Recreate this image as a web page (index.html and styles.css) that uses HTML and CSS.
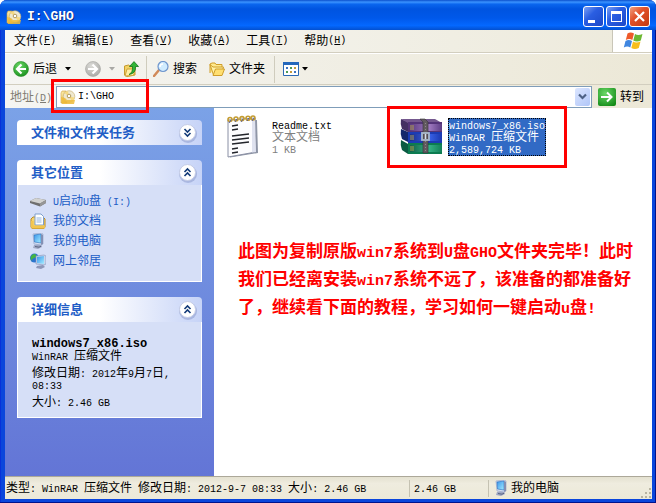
FILE: index.html
```
<!DOCTYPE html>
<html lang="zh-CN">

<head>
    <meta charset="UTF-8">
    <meta name="viewport" content="width=device-width, initial-scale=1.0">
    <title>I:\GHO</title>
    <link rel="stylesheet" href="styles.css">
</head>

<body>
    <!-- 公用图标 -->
    <svg class="sprite" aria-hidden="true">
        <defs>
            <linearGradient id="gold" x1="0" y1="0" x2="1" y2="1">
                <stop offset="0" stop-color="#fff6c0" />
                <stop offset="1" stop-color="#dca321" />
            </linearGradient>
            <linearGradient id="screen" x1="0" y1="0" x2="1" y2="1">
                <stop offset="0" stop-color="#3a95ea" />
                <stop offset="1" stop-color="#a4ecff" />
            </linearGradient>
            <radialGradient id="green" cx=".4" cy=".3" r=".8">
                <stop offset="0" stop-color="#6ad866" />
                <stop offset="1" stop-color="#138a17" />
            </radialGradient>
            <radialGradient id="gray" cx=".4" cy=".3" r=".8">
                <stop offset="0" stop-color="#dcdcd8" />
                <stop offset="1" stop-color="#a5a5a2" />
            </radialGradient>
            <linearGradient id="purple">
                <stop offset="0" stop-color="#5a3a80" />
                <stop offset=".6" stop-color="#a07ac0" />
                <stop offset="1" stop-color="#5c3c84" />
            </linearGradient>
            <linearGradient id="blue">
                <stop offset="0" stop-color="#1a2f8c" />
                <stop offset=".6" stop-color="#3a62e8" />
                <stop offset="1" stop-color="#1a38b0" />
            </linearGradient>
            <linearGradient id="teal">
                <stop offset="0" stop-color="#126048" />
                <stop offset=".6" stop-color="#35b183" />
                <stop offset="1" stop-color="#138058" />
            </linearGradient>
        </defs>
        <symbol id="i-disc" viewBox="0 0 16 16">
            <path d="M1 4l1-2h4l1 2v10H1z" fill="url(#gold)" stroke="#d0a03a" stroke-width=".6" />
            <circle cx="9" cy="7.500" r="5.800" fill="#efe8cf" stroke="#c4ab6a" stroke-width=".6" />
            <path d="M9 7.500L4.500 4A6 6 0 0 1 8 2zM9 7.500l5.500 1A6 6 0 0 1 12 12.500z" fill="#f5d983" />
            <circle cx="9" cy="7" r="1.800" fill="#fff" stroke="#b39a5c" />
            <path d="M1 8l4 1 2 2h8l-1 4H2z" fill="#eebb3a" opacity=".85" />
        </symbol>
        <symbol id="i-pc" viewBox="0 0 16 16">
            <path d="M4 12l7-1 1 3-4 2-5-1z" fill="#9fa7c4" />
            <path d="M3 1l8-1 2 1v10l-2 1-7-1z" fill="#d5def1" stroke="#8fa0c4" stroke-width=".6" />
            <path d="M4 2l7-1v9L4.500 9z" fill="url(#screen)" stroke="#286fc0" stroke-width=".6" />
            <path d="M11 1l2 1v9l-2 1z" fill="#848fb3" />
            <path d="M5 13.500l4 .7 2-1" stroke="#596480" fill="none" />
        </symbol>
        <symbol id="i-up" viewBox="0 0 20 20">
            <circle cx="10" cy="11" r="9" fill="#7f8fc4" opacity=".45" />
            <circle cx="9.500" cy="9.500" r="8" fill="#fff" stroke="#c4cce6" />
            <path d="M6.500 9l3-3 3 3M6.500 13l3-3 3 3" fill="none" stroke="#123a78" stroke-width="1.600" />
        </symbol>
        <symbol id="i-down" viewBox="0 0 20 20">
            <circle cx="10" cy="11" r="9" fill="#7f8fc4" opacity=".45" />
            <circle cx="9.500" cy="9.500" r="8" fill="#fff" stroke="#c4cce6" />
            <path d="M6.500 6l3 3 3-3M6.500 10l3 3 3-3" fill="none" stroke="#123a78" stroke-width="1.600" />
        </symbol>
    </svg>

    <div class="window">
        <header class="titlebar">
            <svg class="icon"><use href="#i-disc" /></svg>
            <h1>I:\GHO</h1>
            <button class="ctrl" aria-label="最小化"><svg viewBox="0 0 19 19"><path d="M4 13h7v3H4z" fill="#fff" /></svg></button>
            <button class="ctrl" aria-label="最大化"><svg viewBox="0 0 19 19"><path d="M4 4h11v11H4zM5 7v7h9V7z" fill="#fff" fill-rule="evenodd" /></svg></button>
            <button class="ctrl close" aria-label="关闭"><svg viewBox="0 0 19 19"><path d="M5 5l9 9M14 5l-9 9" stroke="#fff" stroke-width="2.200" /></svg></button>
        </header>

        <nav class="menubar">
            <button>文件<span class="en">(<u>F</u>)</span></button>
            <button>编辑<span class="en">(<u>E</u>)</span></button>
            <button>查看<span class="en">(<u>V</u>)</span></button>
            <button>收藏<span class="en">(<u>A</u>)</span></button>
            <button>工具<span class="en">(<u>T</u>)</span></button>
            <button>帮助<span class="en">(<u>H</u>)</span></button>
            <span class="flag">
                <svg viewBox="0 0 20 18">
                    <path d="M4.500 1.500q3-2 6.500 0L9.300 8q-3-2-6.500 0z" fill="#ee5a2a" />
                    <path d="M12 2q3 2 7.500 0L17.800 8.500q-4 2-7.500 0z" fill="#6cb832" />
                    <path d="M2.500 9q3-2 6.500 0L7.300 15.500q-3-2-6.500 0z" fill="#3f86e0" />
                    <path d="M10 9.500q3 2 7.500 0L15.800 16q-4 2-7.500 0z" fill="#f8be1c" />
                </svg>
            </span>
        </nav>

        <div class="toolbar">
            <button>
                <svg class="icon" viewBox="0 0 16 16">
                    <circle cx="8" cy="8" r="7.500" fill="url(#green)" stroke="#278c27" stroke-width=".6" />
                    <path d="M8.500 3.500L4 8l4.500 4.500M4 8h9" fill="none" stroke="#fff" stroke-width="2.200" />
                </svg>
                后退
            </button>
            <button class="drop" aria-label="后退列表"><svg viewBox="0 0 6 4"><path d="M0 0h6L3 3.500z" /></svg></button>
            <button class="forward" aria-label="前进">
                <svg class="icon" viewBox="0 0 16 16">
                    <circle cx="8" cy="8" r="7.500" fill="url(#gray)" stroke="#a4a4a0" stroke-width=".6" />
                    <path d="M7.500 3.500L12 8l-4.500 4.500M12 8H3" fill="none" stroke="#fff" stroke-width="2.200" />
                </svg>
            </button>
            <button class="drop off" aria-label="前进列表"><svg viewBox="0 0 6 4"><path d="M0 0h6L3 3.500z" /></svg></button>
            <button class="up" aria-label="向上">
                <svg class="icon" viewBox="0 0 16 16">
                    <path d="M1.500 5l4-1 1.500 1 5 1v8L4 15.500 1.500 14z" fill="#f3d264" stroke="#c69a2d" />
                    <path d="M2 15l2-7h8l-1.500 6.500z" fill="#fff0a4" stroke="#cda43b" />
                    <path d="M6 13.500q4-2 3.500-8H6.500L11 .6 15.500 5.500h-3q.5 7-6.500 8z" fill="#31b536" stroke="#14751c" stroke-width=".8" />
                </svg>
            </button>
            <i class="sep"></i>
            <button>
                <svg class="icon" viewBox="0 0 16 16">
                    <path d="M1 15l5-6" stroke="#d18a5a" stroke-width="2.500" stroke-linecap="round" />
                    <circle cx="10" cy="5.500" r="5" fill="#d0ecff" stroke="#6f96cd" stroke-width="1.200" />
                    <path d="M7 6q0-3 3-3" stroke="#fff" stroke-width="1.500" fill="none" />
                </svg>
                搜索
            </button>
            <button class="folders">
                <svg class="icon" viewBox="0 0 16 16">
                    <path d="M1 12V3l2-1h3l1 1.500h6V7" fill="#ffe98d" stroke="#cf9d28" />
                    <path d="M1 3.500l3 2.500h10.500L12 14.500 4.500 14z" fill="#fff2a6" stroke="#cf9d28" />
                    <path d="M4 14.500L6.500 8h9L13 14.500z" fill="#ffdf70" stroke="#cf9d28" />
                </svg>
                文件夹
            </button>
            <i class="sep"></i>
            <button class="views" aria-label="查看方式">
                <svg class="icon" viewBox="0 0 16 16">
                    <path d="M.5 1.500h15v13H.5z" fill="#fff" stroke="#2b69b4" />
                    <path d="M0 1h16v3H0z" fill="#2467bb" />
                    <path d="M3 6h2v2H3zM11 10h2v2h-2z" fill="#3c72c0" />
                    <path d="M7 6h2v2H7zM3 10h2v2H3z" fill="#4b9b55" />
                    <path d="M11 6h2v2h-2zM7 10h2v2H7z" fill="#c69a3c" />
                </svg>
                <svg class="tri" viewBox="0 0 6 4"><path d="M0 0h6L3 3.500z" /></svg>
            </button>
        </div>

        <div class="addressbar">
            <label for="address">地址<span class="en">(<u>D</u>)</span></label>
            <div class="field">
                <svg class="icon"><use href="#i-disc" /></svg>
                <input id="address" type="text" value="I:\GHO">
                <button class="pick" aria-label="展开"><svg viewBox="0 0 9 8"><path d="M1 1.500l3.500 3.500L8 1.500" fill="none" stroke="#4d6185" stroke-width="2.200" /></svg></button>
            </div>
            <button class="go">
                <svg viewBox="0 0 18 18">
                    <rect width="18" height="18" rx="2" fill="url(#green)" />
                    <path d="M3 9h10M9 4.500L13.500 9 9 13.500" fill="none" stroke="#fff" stroke-width="2" />
                </svg>
                转到
            </button>
            <div class="mark mark-address"></div>
        </div>

        <div class="content">
            <aside class="sidebar">
                <section class="panel">
                    <h2>文件和文件夹任务 <button aria-label="展开"><svg><use href="#i-down" /></svg></button></h2>
                </section>
                <section class="panel">
                    <h2>其它位置 <button aria-label="收起"><svg><use href="#i-up" /></svg></button></h2>
                    <ul class="places">
                        <li><a href="#">
                            <svg class="icon" viewBox="0 0 16 16">
                                <path d="M0 8l6-3 10 2v3l-6 3.500L0 10z" fill="#6f6f6f" />
                                <path d="M0 8l6-3 10 2-6 3.500z" fill="#d2d2d0" />
                                <path d="M10 10.500L16 7v3l-6 3.500z" fill="#969696" />
                            </svg>
                            <span><span class="en">U</span>启动<span class="en">U</span>盘<span class="en"> (I:)</span></span>
                        </a></li>
                        <li><a href="#">
                            <svg class="icon" viewBox="0 0 16 16">
                                <path d="M1 6l2-2h10l2 2v8l-1 1.500H2L1 14z" fill="#f6d46c" stroke="#b98a25" />
                                <path d="M5 1h6l2.500 2.500V12H5z" fill="#fff" stroke="#7e9fcc" />
                                <path d="M6.500 5h5M6.500 7h5M6.500 9h5" stroke="#8fb3e0" />
                                <path d="M1 8h2.500v4.500H15v2L14 15.500H2L1 14z" fill="#f2c550" />
                            </svg>
                            我的文档
                        </a></li>
                        <li><a href="#"><svg class="icon"><use href="#i-pc" /></svg>我的电脑</a></li>
                        <li><a href="#">
                            <svg class="icon" viewBox="0 0 16 16">
                                <circle cx="4.500" cy="5" r="4.500" fill="#2c74cd" />
                                <path d="M2 2q3-2 4 0T4 5t-2 3Q-1 5 2 2z" fill="#44b443" />
                                <path d="M7 13l6-1 2 2-4 2-5-1z" fill="#8e97b8" />
                                <path d="M6 3l8-1 2 1v8l-2 1-8-1z" fill="#cbd5eb" stroke="#7f90b8" stroke-width=".6" />
                                <path d="M7 4l7-1v8l-7-1z" fill="url(#screen)" />
                            </svg>
                            网上邻居
                        </a></li>
                    </ul>
                </section>
                <section class="panel">
                    <h2>详细信息 <button aria-label="收起"><svg><use href="#i-up" /></svg></button></h2>
                    <div class="details">
                        <strong>windows7_x86.iso</strong>
                        <p><span class="en">WinRAR </span>压缩文件</p>
                        <p class="gap">修改日期<span class="en">: 2012</span>年<span class="en">9</span>月<span class="en">7</span>日<span class="en">, 08:33</span></p>
                        <p class="gap">大小<span class="en">: 2.46 GB</span></p>
                    </div>
                </section>
            </aside>

            <main>
                <div class="files">
                    <div class="file">
                        <svg viewBox="0 0 44 44">
                            <path d="M4 7l27-2 1 33-28 4.500z" fill="#8f96a6" />
                            <path d="M2 5l27-2 1 34-28 5z" fill="#fdfdff" stroke="#8a90a4" />
                            <path d="M26 4l3-1 1 34-4 .5z" fill="#dfe2ef" />
                            <path d="M6 11l6-1M6 15l6-1M6 21l17-2M6 25l17-2M6 29l17-2M6 34l6-1M6 38l6-1" stroke="#23252c" stroke-width="1.300" />
                            <g fill="none" stroke="#c39b31" stroke-width="1.600">
                                <circle cx="4" cy="4.500" r="2" />
                                <circle cx="10" cy="4" r="2" />
                                <circle cx="16" cy="3.600" r="2" />
                                <circle cx="22" cy="3.200" r="2" />
                                <circle cx="27" cy="3" r="2" />
                            </g>
                            <path d="M3 8l2-3M9 7l2-3M15 7l2-3M21 6l2-3M26 6l2-3" stroke="#5b6096" />
                        </svg>
                        <div class="info">
                            <p class="name"><span class="en">Readme.txt</span></p>
                            <p>文本文档</p>
                            <p><span class="en">1 KB</span></p>
                        </div>
                    </div>
                    <div class="file selected">
                        <svg viewBox="0 0 44 44">
                            <path d="M1 26l7 2h34v9H8l-7-4z" fill="#e6efe8" />
                            <path d="M1 25l7 4v10l-6-4q-2-5-1-10z" fill="#0a5a42" />
                            <path d="M8 28h34v2H10v7h32v2H8z" fill="#0c7c50" />
                            <path d="M10 30h32v7H10z" fill="url(#teal)" />
                            <path d="M1 14l7 3v10l-6-3q-2-5-1-10z" fill="#14286c" />
                            <path d="M8 17h34v11H8z" fill="#1b3cb4" />
                            <path d="M10 19h32v7H10z" fill="url(#blue)" />
                            <path d="M1 4l7 3v10l-6-3q-2-5-1-10z" fill="#443062" />
                            <path d="M1 4h34l7 4H8z" fill="#74588e" />
                            <path d="M8 7h34v10H8z" fill="#543478" />
                            <path d="M10 9h32v7H10z" fill="url(#purple)" />
                            <path d="M11 10v5M13 10v5M11 20v5M13 20v5M11 31v5M13 31v5" stroke="#b0a050" />
                            <path d="M20 4h5l3 3v31h-5V7z" fill="#625a60" stroke="#373238" stroke-width=".6" />
                            <path d="M25.500 8v30" stroke="#8f878c" stroke-dasharray="1 2" />
                            <rect x="22" y="18" width="7" height="7" fill="none" stroke="#a9b9ca" stroke-width="1.800" />
                            <path d="M25.500 19v5" stroke="#d5dfeb" stroke-width="1.500" />
                        </svg>
                        <div class="info">
                            <p class="name"><span class="en">windows7_x86.iso</span></p>
                            <p><span class="en">WinRAR </span>压缩文件</p>
                            <p><span class="en">2,589,724 KB</span></p>
                        </div>
                        <div class="mark mark-file"></div>
                    </div>
                </div>
                <p class="note">此图为复制原版<span>win7</span>系统到<span>U</span>盘<span>GHO</span>文件夹完毕！此时我们已经离安装<span>win7</span>系统不远了，该准备的都准备好了，继续看下面的教程，学习如何一键启动<span>u</span>盘<span>!</span></p>
            </main>
        </div>

        <footer class="status">
            <p class="summary">类型<span class="en">: WinRAR </span>压缩文件<span class="en"> </span>修改日期<span class="en">: 2012-9-7 08:33 </span>大小<span class="en">: 2.46 GB</span></p>
            <p class="size"><span class="en">2.46 GB</span></p>
            <p class="zone"><svg class="icon"><use href="#i-pc" /></svg>我的电脑</p>
            <svg class="grip" viewBox="0 0 12 12">
                <path d="M9 1h2v2H9zM5 5h2v2H5zM9 5h2v2H9zM1 9h2v2H1zM5 9h2v2H5zM9 9h2v2H9z" fill="#b8b4a2" />
            </svg>
        </footer>
    </div>
</body>

</html>
```
FILE: styles.css
```
* {
    box-sizing: border-box;
    padding: 0;
    margin: 0;
}

body {
    background: #fff;
    color: #000;
    font: 12px/16px "Liberation Sans", "Noto Sans CJK SC", sans-serif;
}

button {
    display: flex;
    align-items: center;
    border: 0;
    background: none;
    color: inherit;
    font: inherit;
    white-space: nowrap;
}

svg {
    display: block;
    flex: none;
}

.sprite {
    position: absolute;
    width: 0;
    height: 0;
}

.icon {
    width: 16px;
    height: 16px;
}

/* 英文和数字 */
.en {
    font-family: "Liberation Mono", monospace;
    font-size: 10px;
    line-height: 8px;
    white-space: pre-wrap;
}

.window {
    display: flex;
    flex-direction: column;
    min-height: 100vh;
    padding: 0 4px 4px 5px;
    border-radius: 7px 7px 0 0;
    background: #0a46dc;
    box-shadow: inset -1px -1px #00138c, inset 1px 0 #0831d9;
}

/* 标题栏 */
.titlebar {
    display: flex;
    align-items: center;
    gap: 2px;
    height: 30px;
    margin: 0 -4px 0 -5px;
    padding: 3px 6px 0 6px;
    border-radius: 7px 7px 0 0;
    background: linear-gradient(#0b50cc, #3b93ff 7%, #0a66ee 14%, #0054e0 30%, #0058ea 60%, #0468ff 85%, #0350d0);
}

.titlebar h1 {
    flex: 1;
    padding-left: 3px;
    color: #fff;
    font: bold 13px/16px "Liberation Mono", monospace;
    text-shadow: 1px 1px #0a2a80;
}

.ctrl {
    width: 21px;
    height: 21px;
    border: 1px solid #fff;
    border-radius: 3px;
    background: linear-gradient(135deg, #7ba0f4, #2a5ee2 40%, #1b48c8);
}

.ctrl svg {
    width: 19px;
    height: 19px;
}

.ctrl.close {
    background: linear-gradient(135deg, #f0a080, #e2522a 40%, #c43a10);
}

/* 菜单 */
.menubar {
    display: flex;
    align-items: center;
    gap: 16px;
    height: 23px;
    padding-left: 9px;
    border-bottom: 1px solid #d2cebf;
    background: linear-gradient(90deg, #f7f7f5, #edeadb);
}

.flag {
    display: flex;
    align-items: center;
    justify-content: center;
    width: 40px;
    height: 22px;
    margin-left: auto;
    border-left: 1px solid #c9c6b8;
    background: #fff;
}

.flag svg {
    width: 20px;
    height: 18px;
}

/* 工具栏 */
.toolbar {
    display: flex;
    align-items: center;
    height: 32px;
    padding-left: 8px;
    border-top: 1px solid #fff;
    border-bottom: 1px solid #d2cebf;
    background: linear-gradient(90deg, #f5f5f2, #ece8d7);
}

.toolbar button {
    gap: 4px;
}

.toolbar .drop {
    padding: 0 8px;
}

.drop svg,
.tri {
    width: 6px;
    height: 4px;
}

.drop.off {
    opacity: .3;
}

.toolbar .forward {
    margin-left: 6px;
}

.toolbar .up {
    margin-right: 7px;
}

.toolbar .folders {
    margin-left: 12px;
}

.sep {
    width: 1px;
    height: 27px;
    background: #cfccbd;
}

.sep + button {
    margin-left: 6px;
}

.folders + .sep {
    margin-left: 9px;
}

.toolbar .views {
    gap: 3px;
    margin-left: 8px;
}

/* 地址栏 */
.addressbar {
    position: relative;
    display: flex;
    align-items: center;
    height: 23px;
    padding: 0 8px 0 5px;
    background: linear-gradient(90deg, #f5f5f2, #ece8d7);
}

.addressbar label {
    width: 46px;
    color: #7f7c73;
    white-space: nowrap;
}

.field {
    display: flex;
    flex: 1;
    align-items: center;
    height: 22px;
    padding: 1px 1px 1px 3px;
    border: 1px solid #7f9db9;
    background: #fff;
}

.field input {
    flex: 1;
    min-width: 0;
    padding-left: 2px;
    border: 0;
    outline: 0;
    background: none;
    font: 10px/16px "Liberation Mono", monospace;
}

.pick {
    justify-content: center;
    width: 15px;
    height: 18px;
    border-radius: 2px;
    background: linear-gradient(135deg, #dce6ff, #b0c6f8);
}

.pick svg {
    width: 9px;
    height: 8px;
}

.go {
    gap: 4px;
    margin-left: 6px;
}

.go svg {
    width: 18px;
    height: 18px;
}

/* 红框标注 */
.mark {
    position: absolute;
    z-index: 1;
    border: 3px solid #f00;
    pointer-events: none;
}

.mark-address {
    top: -6px;
    left: 46px;
    width: 98px;
    height: 34px;
}

.mark-file {
    top: -8px;
    left: -13px;
    width: 180px;
    height: 62px;
}

.content {
    display: flex;
    flex: 1;
    background: #fff;
}

/* 左侧任务栏 */
.sidebar {
    flex: none;
    width: 209px;
    padding: 12px;
    background: linear-gradient(#7ba2e7, #6375d6);
}

.panel {
    margin-bottom: 15px;
}

.panel h2 {
    display: flex;
    align-items: center;
    justify-content: space-between;
    height: 25px;
    padding: 0 4px 0 14px;
    border-radius: 4px 4px 0 0;
    background: linear-gradient(90deg, #fff 45%, #c6d3f7);
    color: #215dc6;
    font-size: 13px;
    line-height: 20px;
}

.panel h2 svg {
    width: 20px;
    height: 20px;
}

.places,
.details {
    border: 1px solid #fff;
    border-top: 0;
    background: #d6dff7;
}

.places {
    padding: 6px 12px 10px;
    list-style: none;
}

.places a {
    display: flex;
    align-items: center;
    gap: 7px;
    height: 20px;
    color: #215dc6;
    text-decoration: none;
}

.details {
    padding: 16px 24px 9px 14px;
    line-height: 12px;
}

.details strong {
    display: block;
    font: bold 12px/12px "Liberation Mono", monospace;
}

.details .gap {
    margin-top: 5px;
}

/* 文件列表 */
main {
    flex: 1;
    padding: 6px 12px;
}

.files {
    display: grid;
    grid-template-columns: 174px 180px;
}

.file {
    position: relative;
    display: flex;
    align-items: center;
    height: 46px;
    color: #808080;
}

.file svg {
    width: 44px;
    height: 44px;
}

.info {
    margin-left: 2px;
    line-height: 12px;
}

.info .name {
    color: #000;
}

.selected .info {
    padding: 1px;
    margin-left: 4px;
    outline: 1px dotted #000;
    outline-offset: -1px;
    background: #316ac5;
    color: #fff;
}

.selected .name {
    color: #fff;
}

.note {
    margin: 78px 0 0 12px;
    color: #f00;
    font-weight: bold;
    font-size: 17px;
    line-height: 28px;
}

.note span {
    font-family: "Liberation Mono", monospace;
    font-size: 15px;
    line-height: 15px;
}

/* 状态栏 */
.status {
    display: flex;
    align-items: center;
    height: 23px;
    border-top: 1px solid #aca899;
    background: linear-gradient(#e4e1d0, #efecdf 30%, #ece9d8);
}

.summary {
    flex: 1;
    padding-left: 1px;
}

.size,
.zone {
    height: 17px;
    padding-left: 4px;
    border-left: 1px solid #c5c2b2;
}

.size {
    width: 79px;
}

.zone {
    display: flex;
    align-items: center;
    gap: 2px;
    width: 152px;
}

.grip {
    align-self: flex-end;
    width: 12px;
    height: 12px;
}
```
